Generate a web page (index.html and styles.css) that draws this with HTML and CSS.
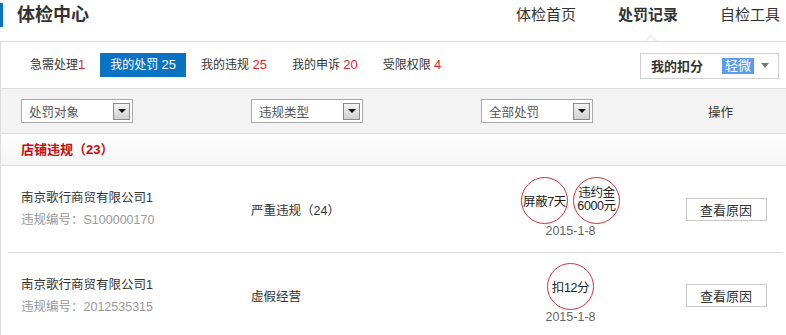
FILE: index.html
```html
<!DOCTYPE html>
<html lang="zh-CN">
<head>
<meta charset="utf-8">
<title>体检中心</title>
<link rel="stylesheet" href="styles.css">
</head>
<body>
<header class="header">
  <div class="brand"><span class="brand-bar"></span><h1 class="brand-title">体检中心</h1></div>
  <nav class="nav">
    <a class="nav-item">体检首页</a>
    <a class="nav-item nav-active">处罚记录</a>
    <a class="nav-item">自检工具</a>
  </nav>
</header>
<section class="panel">
  <span class="notch"></span>
  <div class="tabs">
    <div class="tab-list">
      <a class="tab">急需处理<em class="num">1</em></a>
      <a class="tab tab-active">我的处罚 <em class="num">25</em></a>
      <a class="tab">我的违规 <em class="num">25</em></a>
      <a class="tab">我的申诉 <em class="num">20</em></a>
      <a class="tab">受限权限 <em class="num">4</em></a>
    </div>
    <div class="score">
      <span class="score-label">我的扣分</span>
      <span class="score-level">轻微</span>
      <span class="score-arrow"></span>
    </div>
  </div>
  <div class="grid filters">
    <div class="cell"><div class="select"><span>处罚对象</span><span class="select-btn"><i></i></span></div></div>
    <div class="cell"><div class="select"><span>违规类型</span><span class="select-btn"><i></i></span></div></div>
    <div class="cell"><div class="select"><span>全部处罚</span><span class="select-btn"><i></i></span></div></div>
    <div class="cell op-head">操作</div>
  </div>
  <div class="section-title">店铺违规（23）</div>
  <div class="grid row">
    <div class="cell shop">
      <div class="shop-name">南京歌行商贸有限公司1</div>
      <div class="shop-code">违规编号：S100000170</div>
    </div>
    <div class="cell type">严重违规（24）</div>
    <div class="cell penalty">
      <div class="stamps">
        <span class="stamp">屏蔽7天</span>
        <span class="stamp stamp-two">违约金<br>6000元</span>
      </div>
      <div class="date">2015-1-8</div>
    </div>
    <div class="cell op"><button class="btn">查看原因</button></div>
  </div>
  <div class="grid row">
    <div class="cell shop">
      <div class="shop-name">南京歌行商贸有限公司1</div>
      <div class="shop-code">违规编号：2012535315</div>
    </div>
    <div class="cell type">虚假经营</div>
    <div class="cell penalty">
      <div class="stamps">
        <span class="stamp">扣12分</span>
      </div>
      <div class="date">2015-1-8</div>
    </div>
    <div class="cell op"><button class="btn">查看原因</button></div>
  </div>
</section>
</body>
</html>
```
FILE: styles.css
```css
* { box-sizing: border-box; }
body {
  margin: 0;
  font-family: "Liberation Sans", "Noto Sans CJK SC", sans-serif;
  font-size: 12px;
  color: #333;
  background: #fff;
  overflow: hidden;
}
.header {
  height: 30px;
  display: flex;
  align-items: center;
  justify-content: space-between;
  margin-bottom: 11px;
}
.brand { display: flex; align-items: center; }
.brand-bar {
  width: 3px;
  height: 24px;
  background: #0b72c3;
}
.brand-title {
  margin: 0 0 0 14px;
  font-size: 18px;
  font-weight: bold;
  color: #333;
  line-height: 24px;
}
.nav {
  display: flex;
  gap: 42px;
  padding-right: 6px;
}
.nav-item {
  font-size: 15px;
  color: #333;
  line-height: 20px;
}
.nav-active { font-weight: bold; }

.panel {
  position: relative;
  border-top: 1px solid #dcdcdc;
  border-left: 1px solid #dcdcdc;
}
.notch {
  position: absolute;
  left: 644px;
  top: -7px;
  width: 0;
  height: 0;
  border-left: 6px solid transparent;
  border-right: 6px solid transparent;
  border-bottom: 6px solid #dcdcdc;
}
.notch::after {
  content: "";
  position: absolute;
  left: -5px;
  top: 1px;
  border-left: 5px solid transparent;
  border-right: 5px solid transparent;
  border-bottom: 5px solid #fff;
}
.tabs {
  height: 47px;
  display: flex;
  align-items: center;
  justify-content: space-between;
  border-bottom: 1px solid #dcdcdc;
  padding: 0 7px 0 19px;
}
.tab-list { display: flex; gap: 5px; }
.tab {
  display: block;
  height: 24px;
  line-height: 24px;
  padding: 0 10px;
  font-size: 12px;
  color: #333;
}
.num {
  font-style: normal;
  font-size: 13px;
  color: #e0252f;
}
.tab-active {
  background: #0a72c2;
  color: #fff;
}
.tab-active .num { color: #fff; }
.score {
  width: 139px;
  height: 26px;
  border: 1px solid #cfcfcf;
  display: flex;
  align-items: center;
  padding-left: 10px;
  margin-top: 1px;
}
.score-label {
  font-weight: bold;
  font-size: 13px;
  color: #333;
  width: 71px;
}
.score-level {
  background: #5b9bef;
  color: #fff;
  font-size: 13px;
  height: 16px;
  line-height: 16px;
  padding: 0 3px;
}
.score-arrow {
  margin-left: 7px;
  border-left: 4px solid transparent;
  border-right: 4px solid transparent;
  border-top: 5px solid #777;
}

.grid {
  display: grid;
  grid-template-columns: 230px 230px 182px 1fr;
  padding-left: 20px;
}
.filters {
  height: 45px;
  background: #f3f3f3;
  border-bottom: 1px solid #dcdcdc;
  align-items: center;
}
.select {
  width: 112px;
  height: 24px;
  border: 1px solid #a9a9a9;
  background: #fff;
  display: flex;
  align-items: center;
  justify-content: space-between;
  padding: 0 2px 0 7px;
  font-size: 12.5px;
  color: #555;
}
.select-btn {
  width: 17px;
  height: 17px;
  border: 1px solid #8a8a8a;
  background: linear-gradient(#f4f4f4, #cfcfcf);
  display: flex;
  align-items: center;
  justify-content: center;
}
.select-btn i {
  border-left: 4px solid transparent;
  border-right: 4px solid transparent;
  border-top: 4px solid #111;
}
.op-head {
  text-align: center;
  font-size: 12.5px;
  color: #333;
  padding-right: 8px;
}
.section-title {
  height: 32px;
  line-height: 31px;
  padding-left: 20px;
  background: linear-gradient(#fff, #f5f5f5);
  border-bottom: 1px solid #dcdcdc;
  color: #c50d0d;
  font-weight: bold;
  font-size: 13px;
}
.row {
  height: 86px;
  align-items: center;
  margin-left: 7px;
  padding-left: 13px;
  margin-right: 3px;
}
.row + .row { border-top: 1px solid #dcdcdc; }
.shop-name { line-height: 22px; font-size: 12.5px; color: #333; }
.shop-code { line-height: 22px; font-size: 12.5px; color: #999; }
.type { font-size: 12.5px; color: #333; }
.penalty {
  display: flex;
  flex-direction: column;
  align-items: center;
  margin-left: -3px;
  margin-top: -4px;
}
.stamps { display: flex; gap: 5px; }
.stamp {
  width: 47px;
  height: 47px;
  border: 1.5px solid #c9343f;
  border-radius: 50%;
  display: flex;
  align-items: center;
  justify-content: center;
  text-align: center;
  font-size: 12.5px;
  letter-spacing: -0.4px;
  color: #222;
  white-space: nowrap;
}
.stamp-two { line-height: 13px; }
.date {
  margin-top: 0;
  font-size: 12.5px;
  color: #666;
  line-height: 14px;
}
.op { display: flex; justify-content: center; padding-left: 6px; }
.btn {
  width: 81px;
  height: 23px;
  border: 1px solid #c8c8c8;
  background: #fff;
  font-family: inherit;
  font-size: 13px;
  color: #333;
  padding: 0;
}
```
